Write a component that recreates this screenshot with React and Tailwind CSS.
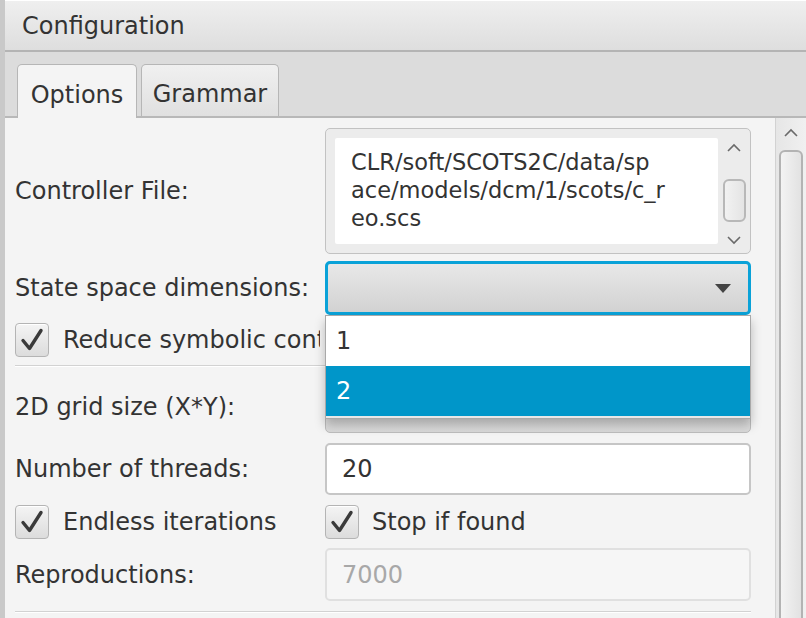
import React from 'react';

const font = { fontFamily: '"DejaVu Sans", "Liberation Sans", sans-serif' };

function Check() {
  return (
    <div className="w-[34px] h-[34px] shrink-0 rounded-[4px] border border-[#b4b4b4] bg-gradient-to-b from-[#f4f4f4] to-[#dcdcdc] flex items-center justify-center shadow-[inset_0_1px_0_#fff]">
      <svg width="26" height="26" viewBox="0 0 26 26">
        <path d="M4 13.5 L10.5 21.5 L22 3.5" fill="none" stroke="#3a3a3a" strokeWidth="3.4" strokeLinecap="round" strokeLinejoin="round" />
      </svg>
    </div>
  );
}

function Chevron({ down, className }) {
  return (
    <svg width="16" height="10" viewBox="0 0 16 10" className={className}>
      <path d={down ? 'M2 2 L8 8 L14 2' : 'M2 8 L8 2 L14 8'} fill="none" stroke="#6a6a6a" strokeWidth="1.6" />
    </svg>
  );
}

function Label({ children }) {
  return <div className="w-[310px] shrink-0 text-[24px] text-[#333] leading-none whitespace-nowrap">{children}</div>;
}

export default function App() {
  return (
    <div style={font} className="w-[806px] h-[618px] overflow-hidden flex flex-col bg-[#f4f4f4] border-l-[5px] border-[#c9c9c9]">
      {/* title */}
      <div className="h-[52px] shrink-0 border-t border-white border-b-2 border-b-[#b4b4b4] bg-gradient-to-b from-[#efefef] to-[#dedede] flex items-center pl-[17px] text-[24px] text-[#333]">
        Configuration
      </div>

      {/* tabs */}
      <div className="h-[66px] shrink-0 bg-[#dcdcdc] border-b-2 border-[#b8b8b8] flex items-end pl-[12px] gap-[4px]">
        <div className="relative -mb-[2px] h-[54px] w-[120px] rounded-t-[5px] border border-b-0 border-[#b6b6b6] bg-[#f4f4f4] flex items-center justify-center text-[24px] text-[#333] pt-[6px]">
          Options
        </div>
        <div className="h-[52px] w-[138px] rounded-t-[5px] border border-b-0 border-[#b6b6b6] bg-gradient-to-b from-[#f0f0f0] to-[#e0e0e0] flex items-center justify-center text-[24px] text-[#333] pt-[6px]">
          Grammar
        </div>
      </div>

      <div className="flex-1 flex min-h-0">
        <div className="flex-1 pl-[10px] pt-[10px] pr-[24px] flex flex-col">
          {/* controller file */}
          <div className="flex items-center">
            <Label>Controller File:</Label>
            <div className="w-[426px] h-[126px] rounded-[5px] border border-[#c2c2c2] bg-[#ececec] flex p-[9px] pr-0">
              <div className="flex-1 bg-white rounded-[2px] pl-[16px] pt-[10px] text-[22.5px] leading-[28px] text-[#333] whitespace-nowrap overflow-hidden">
                <div>CLR/soft/SCOTS2C/data/sp</div>
                <div>ace/models/dcm/1/scots/c_r</div>
                <div>eo.scs</div>
              </div>
              <div className="w-[32px] flex flex-col items-center -mt-[9px] -mb-[9px] pt-[14px] pb-[8px]">
                <Chevron />
                <div className="mt-[26px] w-[23px] h-[43px] rounded-[6px] border-2 border-[#b8b8b8] bg-gradient-to-r from-[#f2f2f2] to-[#e4e4e4]" />
                <div className="flex-1" />
                <Chevron down />
              </div>
            </div>
          </div>

          {/* state space dims */}
          <div className="flex items-center mt-[7px]">
            <Label>State space dimensions:</Label>
            <div className="relative w-[426px] h-[54px]">
              <div className="h-full rounded-[5px] border-[3px] border-[#0aa2d8] bg-gradient-to-b from-[#e8e8e8] to-[#d2d2d2] flex items-center justify-end pr-[17px]">
                <svg width="16" height="9" viewBox="0 0 16 9">
                  <path d="M0 0 L16 0 L8 9 Z" fill="#444" />
                </svg>
              </div>
              <div className="absolute left-0 top-full z-10 w-full border border-[#a9a9a9] bg-white shadow-[0_6px_10px_rgba(0,0,0,0.25)]">
                <div className="h-[50px] flex items-center pl-[10px] text-[24px] text-[#333]">1</div>
                <div className="h-[50px] flex items-center pl-[10px] text-[24px] text-white bg-[#0096c9]">2</div>
                <div className="h-[2px] bg-[#e8e8e8]" />
              </div>
            </div>
          </div>

          {/* reduce: label is covered by the open popup */}
          <div className="flex items-center mt-[8px] h-[34px]">
            <Check />
            <div className="ml-[14px] w-[257px] overflow-hidden whitespace-nowrap text-[24px] text-[#333]">Reduce symbolic controller</div>
          </div>

          <div className="mt-[8px] h-[2px] bg-[#d2d2d2] border-b border-white w-[736px]" />

          {/* 2D grid */}
          <div className="flex items-center mt-[14px]">
            <Label>2D grid size (X*Y):</Label>
            <div className="w-[426px] h-[52px] rounded-[5px] border border-[#bdbdbd] bg-gradient-to-b from-[#f0f0f0] to-[#dadada]" />
          </div>

          {/* threads */}
          <div className="flex items-center mt-[10px]">
            <Label>Number of threads:</Label>
            <div className="w-[426px] h-[52px] rounded-[5px] border-2 border-[#c6c6c6] bg-white flex items-center pl-[15px] text-[24px] text-[#333]">20</div>
          </div>

          {/* checks */}
          <div className="flex items-center mt-[10px] h-[34px]">
            <div className="w-[310px] flex items-center">
              <Check />
              <span className="ml-[14px] text-[24px] text-[#333]">Endless iterations</span>
            </div>
            <Check />
            <span className="ml-[13px] text-[24px] text-[#333]">Stop if found</span>
          </div>

          {/* reproductions */}
          <div className="flex items-center mt-[9px]">
            <Label>Reproductions:</Label>
            <div className="w-[426px] h-[53px] rounded-[5px] border-2 border-[#e0e0e0] bg-[#f6f6f6] flex items-center pl-[15px] text-[24px] text-[#a8a8a8]">7000</div>
          </div>

          <div className="mt-[10px] h-[2px] bg-[#d2d2d2] border-b border-white w-[736px]" />
        </div>

        {/* scrollbar */}
        <div className="w-[31px] shrink-0 border-l border-[#d2d2d2] bg-gradient-to-r from-[#e6e6e6] to-[#f0f0f0] flex flex-col items-center pt-[10px]">
          <Chevron />
          <div className="mt-[12px] w-[24px] flex-1 -mb-[4px] rounded-t-[6px] border-2 border-[#b3b3b3] bg-gradient-to-r from-[#f3f3f3] to-[#e2e2e2]" />
        </div>
      </div>
    </div>
  );
}
